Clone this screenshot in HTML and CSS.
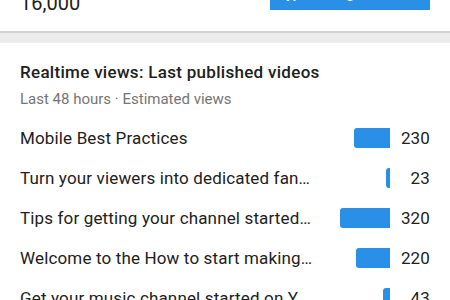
FILE: index.html
```html
<!DOCTYPE html>
<html lang="en">

<head>
    <meta charset="UTF-8">
    <title>Realtime views</title>
    <meta name="viewport" content="width=device-width, initial-scale=1">
    <link rel="stylesheet" href="styles.css">
</head>

<body>
    <div id="page">
        <div class="card summary">
            <div class="summary-row">
                <span class="summary-value">16,000</span>
                <div class="summary-bar">Typical range</div>
            </div>
        </div>

        <div class="card realtime">
            <h2 class="card-title">Realtime views: Last published videos</h2>
            <p class="card-subtitle">Last 48 hours · Estimated views</p>
            <ul class="video-list">
                <li class="video-row">
                    <span class="video-title">Mobile Best Practices</span>
                    <span class="bar-track"><span class="bar" style="width: 36px"></span></span>
                    <span class="video-views">230</span>
                </li>
                <li class="video-row">
                    <span class="video-title">Turn your viewers into dedicated fans with playlists</span>
                    <span class="bar-track"><span class="bar" style="width: 4px"></span></span>
                    <span class="video-views">23</span>
                </li>
                <li class="video-row">
                    <span class="video-title">Tips for getting your channel started on YouTube</span>
                    <span class="bar-track"><span class="bar" style="width: 50px"></span></span>
                    <span class="video-views">320</span>
                </li>
                <li class="video-row">
                    <span class="video-title">Welcome to the How to start making videos series</span>
                    <span class="bar-track"><span class="bar" style="width: 34px"></span></span>
                    <span class="video-views">220</span>
                </li>
                <li class="video-row">
                    <span class="video-title">Get your music channel started on YouTube</span>
                    <span class="bar-track"><span class="bar" style="width: 7px"></span></span>
                    <span class="video-views">43</span>
                </li>
            </ul>
        </div>
    </div>
</body>

</html>
```

FILE: styles.css
```css
* {
    margin: 0;
    padding: 0;
    box-sizing: border-box;
}

body {
    font-family: Roboto, "Liberation Sans", sans-serif;
    background-color: #ececec;
    color: #212121;
    overflow: hidden;
}

#page {
    margin-top: -16px;
}

.card {
    background-color: #FFFFFF;
}

.summary {
    padding: 0 20px 16px;
    border-bottom: 2px solid #d2d2d2;
    margin-bottom: 10px;
}

.summary-row {
    display: flex;
    flex-direction: row;
    align-items: flex-end;
    justify-content: space-between;
}

.summary-value {
    font-size: 20px;
    line-height: 24px;
}

.summary-bar {
    width: 160px;
    height: 26px;
    margin-bottom: 5px;
    background-color: #2a8fe6;
    color: #FFFFFF;
    font-size: 14px;
    line-height: 18px;
    padding-left: 8px;
    font-weight: 500;
}

.realtime {
    padding: 17px 20px 0;
}

.card-title {
    font-size: 17px;
    font-weight: 500;
    line-height: 24px;
    letter-spacing: 0.3px;
    margin-bottom: 5px;
}

.card-subtitle {
    font-size: 15px;
    line-height: 20px;
    color: #757575;
    margin-bottom: 9px;
}

.video-list {
    list-style: none;
}

.video-row {
    display: flex;
    flex-direction: row;
    align-items: center;
    height: 40px;
    font-size: 17px;
    letter-spacing: 0.15px;
}

.video-title {
    flex: 1;
    min-width: 0;
    white-space: nowrap;
    overflow: hidden;
    text-overflow: ellipsis;
    margin-right: 6px;
}

.bar-track {
    width: 70px;
    display: flex;
    justify-content: flex-end;
}

.bar {
    height: 20px;
    background-color: #2a8fe6;
    border-radius: 3px 0 0 3px;
}

.video-views {
    width: 40px;
    text-align: right;
}
```
